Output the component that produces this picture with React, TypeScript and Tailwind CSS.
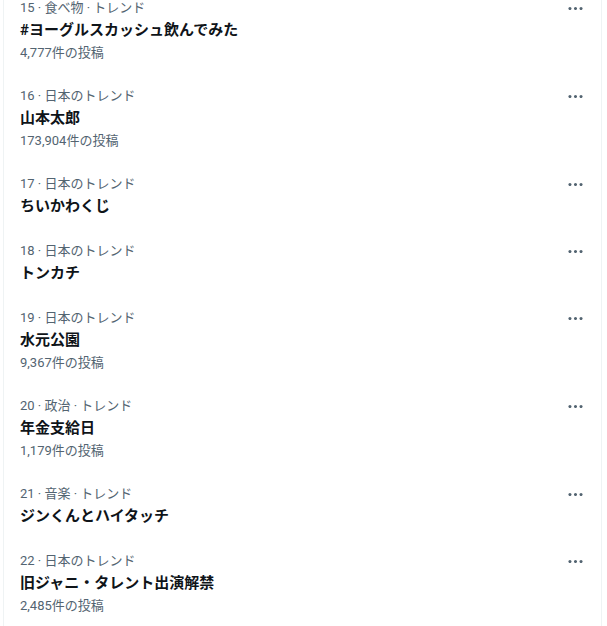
import React from 'react';

interface Trend {
  rank: number;
  category: string;
  title: string;
  posts?: string;
}

const trends: Trend[] = [
  { rank: 15, category: '食べ物 · トレンド', title: '#ヨーグルスカッシュ飲んでみた', posts: '4,777件の投稿' },
  { rank: 16, category: '日本のトレンド', title: '山本太郎', posts: '173,904件の投稿' },
  { rank: 17, category: '日本のトレンド', title: 'ちいかわくじ' },
  { rank: 18, category: '日本のトレンド', title: 'トンカチ' },
  { rank: 19, category: '日本のトレンド', title: '水元公園', posts: '9,367件の投稿' },
  { rank: 20, category: '政治 · トレンド', title: '年金支給日', posts: '1,179件の投稿' },
  { rank: 21, category: '音楽 · トレンド', title: 'ジンくんとハイタッチ' },
  { rank: 22, category: '日本のトレンド', title: '旧ジャニ・タレント出演解禁', posts: '2,485件の投稿' },
];

function MoreIcon() {
  return (
    <svg viewBox="0 0 24 24" className="w-[19px] h-[19px] fill-[#536471]">
      <path d="M3 12c0-1.1.9-2 2-2s2 .9 2 2-.9 2-2 2-2-.9-2-2zm9 2c1.1 0 2-.9 2-2s-.9-2-2-2-2 .9-2 2 .9 2 2 2zm7 0c1.1 0 2-.9 2-2s-.9-2-2-2-2 .9-2 2 .9 2 2 2z" />
    </svg>
  );
}

function TrendRow({ trend }: { trend: Trend }) {
  return (
    <div className="flex justify-between pl-4 pr-[16px] pt-3 pb-[13px]">
      <div className="flex flex-col">
        <span className="text-[13px] leading-[18px] text-[#536471]">
          {trend.rank} · {trend.category}
        </span>
        <span className="mt-[2px] text-[15px] leading-[22px] font-bold text-[#0f1419]">
          {trend.title}
        </span>
        {trend.posts && (
          <span className="mt-[3px] text-[13px] leading-[18px] text-[#536471]">{trend.posts}</span>
        )}
      </div>
      <div className="h-[18px] flex items-center">
        <MoreIcon />
      </div>
    </div>
  );
}

export default function App() {
  return (
    <div
      className="w-[607px] h-[626px] overflow-hidden bg-white"
      style={{ fontFamily: 'Roboto, "Noto Sans CJK JP", sans-serif' }}
    >
      <div className="ml-[3px] w-[599px] h-full flex flex-col border-x border-[#eff3f4]">
        <div className="-mt-[13px]">
          {trends.map((t) => (
            <TrendRow key={t.rank} trend={t} />
          ))}
        </div>
      </div>
    </div>
  );
}
